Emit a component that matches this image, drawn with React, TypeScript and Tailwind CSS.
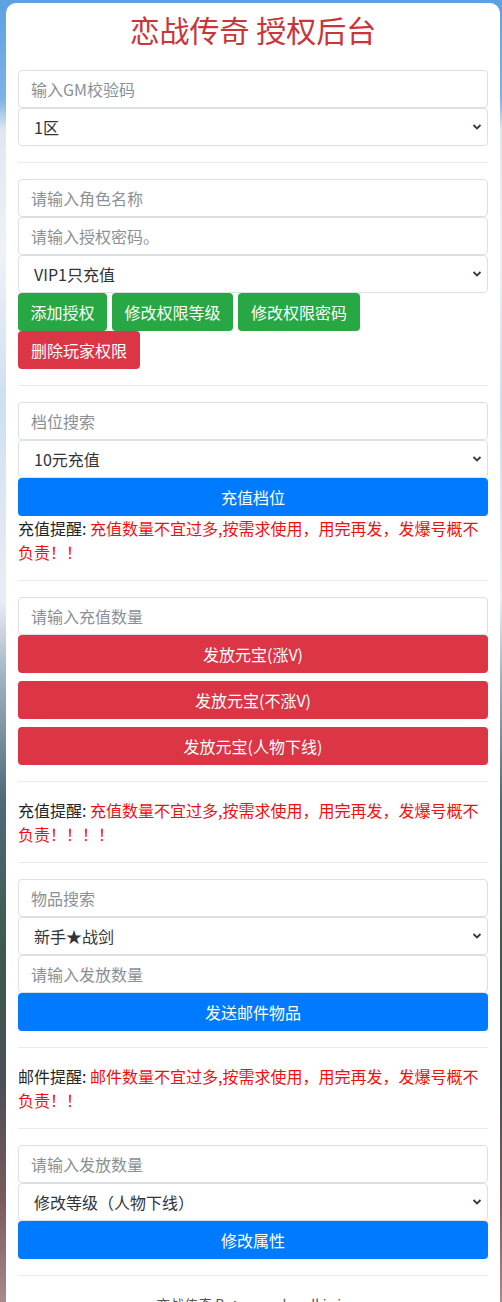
import React from "react";

const font = { fontFamily: '"Noto Sans CJK SC", "Noto Sans", sans-serif' };

function Input({ placeholder }: { placeholder: string }) {
  return (
    <input
      placeholder={placeholder}
      className="block w-full h-[38px] px-[12px] text-[16px] leading-[24px] text-[#495057] bg-white border border-[#dcdfe3] rounded-[4px] outline-none placeholder:text-[#8a9096]"
    />
  );
}

function Select({ value }: { value: string }) {
  return (
    <div className="relative w-full h-[38px]">
      <select
        defaultValue={value}
        className="block w-full h-[38px] pl-[15px] pr-[28px] text-[16px] leading-[24px] text-[#303438] bg-white border border-[#dcdfe3] rounded-[4px] outline-none appearance-none"
      >
        <option>{value}</option>
      </select>
      <svg
        className="pointer-events-none absolute right-[6px] top-[15px]"
        width="10"
        height="8"
        viewBox="0 0 10 8"
      >
        <path d="M1.5 2 L5 5.5 L8.5 2" fill="none" stroke="#343a40" strokeWidth="1.8" />
      </svg>
    </div>
  );
}

function Btn({
  children,
  color,
  block,
  w,
}: {
  children: React.ReactNode;
  color: "blue" | "red" | "green";
  block?: boolean;
  w?: string;
}) {
  const c =
    color === "blue"
      ? "bg-[#007bff]"
      : color === "red"
      ? "bg-[#dc3545]"
      : "bg-[#28a745]";
  return (
    <button
      className={`${c} ${block ? "block w-full" : "inline-block"} ${w ?? ""} h-[38px] px-[12px] text-[16px] leading-[24px] text-white rounded-[4px] text-center`}
    >
      {children}
    </button>
  );
}

function Hr() {
  return <hr className="my-[16px] border-0 border-t border-[#e9eaeb]" />;
}

export default function App() {
  return (
    <div
      className="min-h-[1302px] w-full pt-[3px] pl-[6px] pr-[2px] bg-[linear-gradient(180deg,#5fa0e0_0px,#7fb2e6_100px,#dfe7ef_130px,#eef2f6_250px,#cfdff0_400px,#e8eef4_600px,#9fb0c0_680px,#4f6a78_800px,#3f5a4c_950px,#4a4f58_1080px,#7a5a5a_1200px,#a88a8a_1302px)]"
      style={font}
    >
      <div className="bg-white rounded-[10px] px-[12px] pt-[8px] pb-[20px]">
        <h1 className="text-center text-[30px] leading-[36px] text-[#c8353a] font-normal mb-[23px]">
          恋战传奇 授权后台
        </h1>

        <Input placeholder="输入GM校验码" />
        <Select value="1区" />
        <Hr />

        <Input placeholder="请输入角色名称" />
        <Input placeholder="请输入授权密码。" />
        <Select value="VIP1只充值" />
        <div className="flex gap-x-[5px]">
          <Btn color="green" w="w-[89px]">添加授权</Btn>
          <Btn color="green" w="w-[121px]">修改权限等级</Btn>
          <Btn color="green" w="w-[122px]">修改权限密码</Btn>
        </div>
        <div className="flex">
          <Btn color="red" w="w-[122px]">删除玩家权限</Btn>
        </div>
        <Hr />

        <Input placeholder="档位搜索" />
        <Select value="10元充值" />
        <Btn color="blue" block>
          充值档位
        </Btn>
        <p className="text-[16px] leading-[24px] text-[#212529] mb-[16px]">
          充值提醒: <span className="text-[#f01010]">充值数量不宜过多,按需求使用，用完再发，发爆号概不负责！！</span>
        </p>
        <Hr />

        <Input placeholder="请输入充值数量" />
        <Btn color="red" block>
          发放元宝(涨V)
        </Btn>
        <div className="mt-[8px]">
          <Btn color="red" block>
            发放元宝(不涨V)
          </Btn>
        </div>
        <div className="mt-[8px]">
          <Btn color="red" block>
            发放元宝(人物下线)
          </Btn>
        </div>
        <Hr />

        <p className="text-[16px] leading-[24px] text-[#212529] mb-[16px]">
          充值提醒: <span className="text-[#f01010]">充值数量不宜过多,按需求使用，用完再发，发爆号概不负责！！！！</span>
        </p>
        <Hr />

        <Input placeholder="物品搜索" />
        <Select value="新手★战剑" />
        <Input placeholder="请输入发放数量" />
        <Btn color="blue" block>
          发送邮件物品
        </Btn>
        <Hr />

        <p className="text-[16px] leading-[24px] text-[#212529] mb-[16px]">
          邮件提醒: <span className="text-[#f01010]">邮件数量不宜过多,按需求使用，用完再发，发爆号概不负责！！</span>
        </p>
        <Hr />

        <Input placeholder="请输入发放数量" />
        <Select value="修改等级（人物下线）" />
        <Btn color="blue" block>
          修改属性
        </Btn>
        <Hr />

        <p className="text-center text-[14px] leading-[21px] text-[#555] pt-[2px]">
          恋战传奇 By：www.lyzwlkj.vip
        </p>
      </div>
    </div>
  );
}
